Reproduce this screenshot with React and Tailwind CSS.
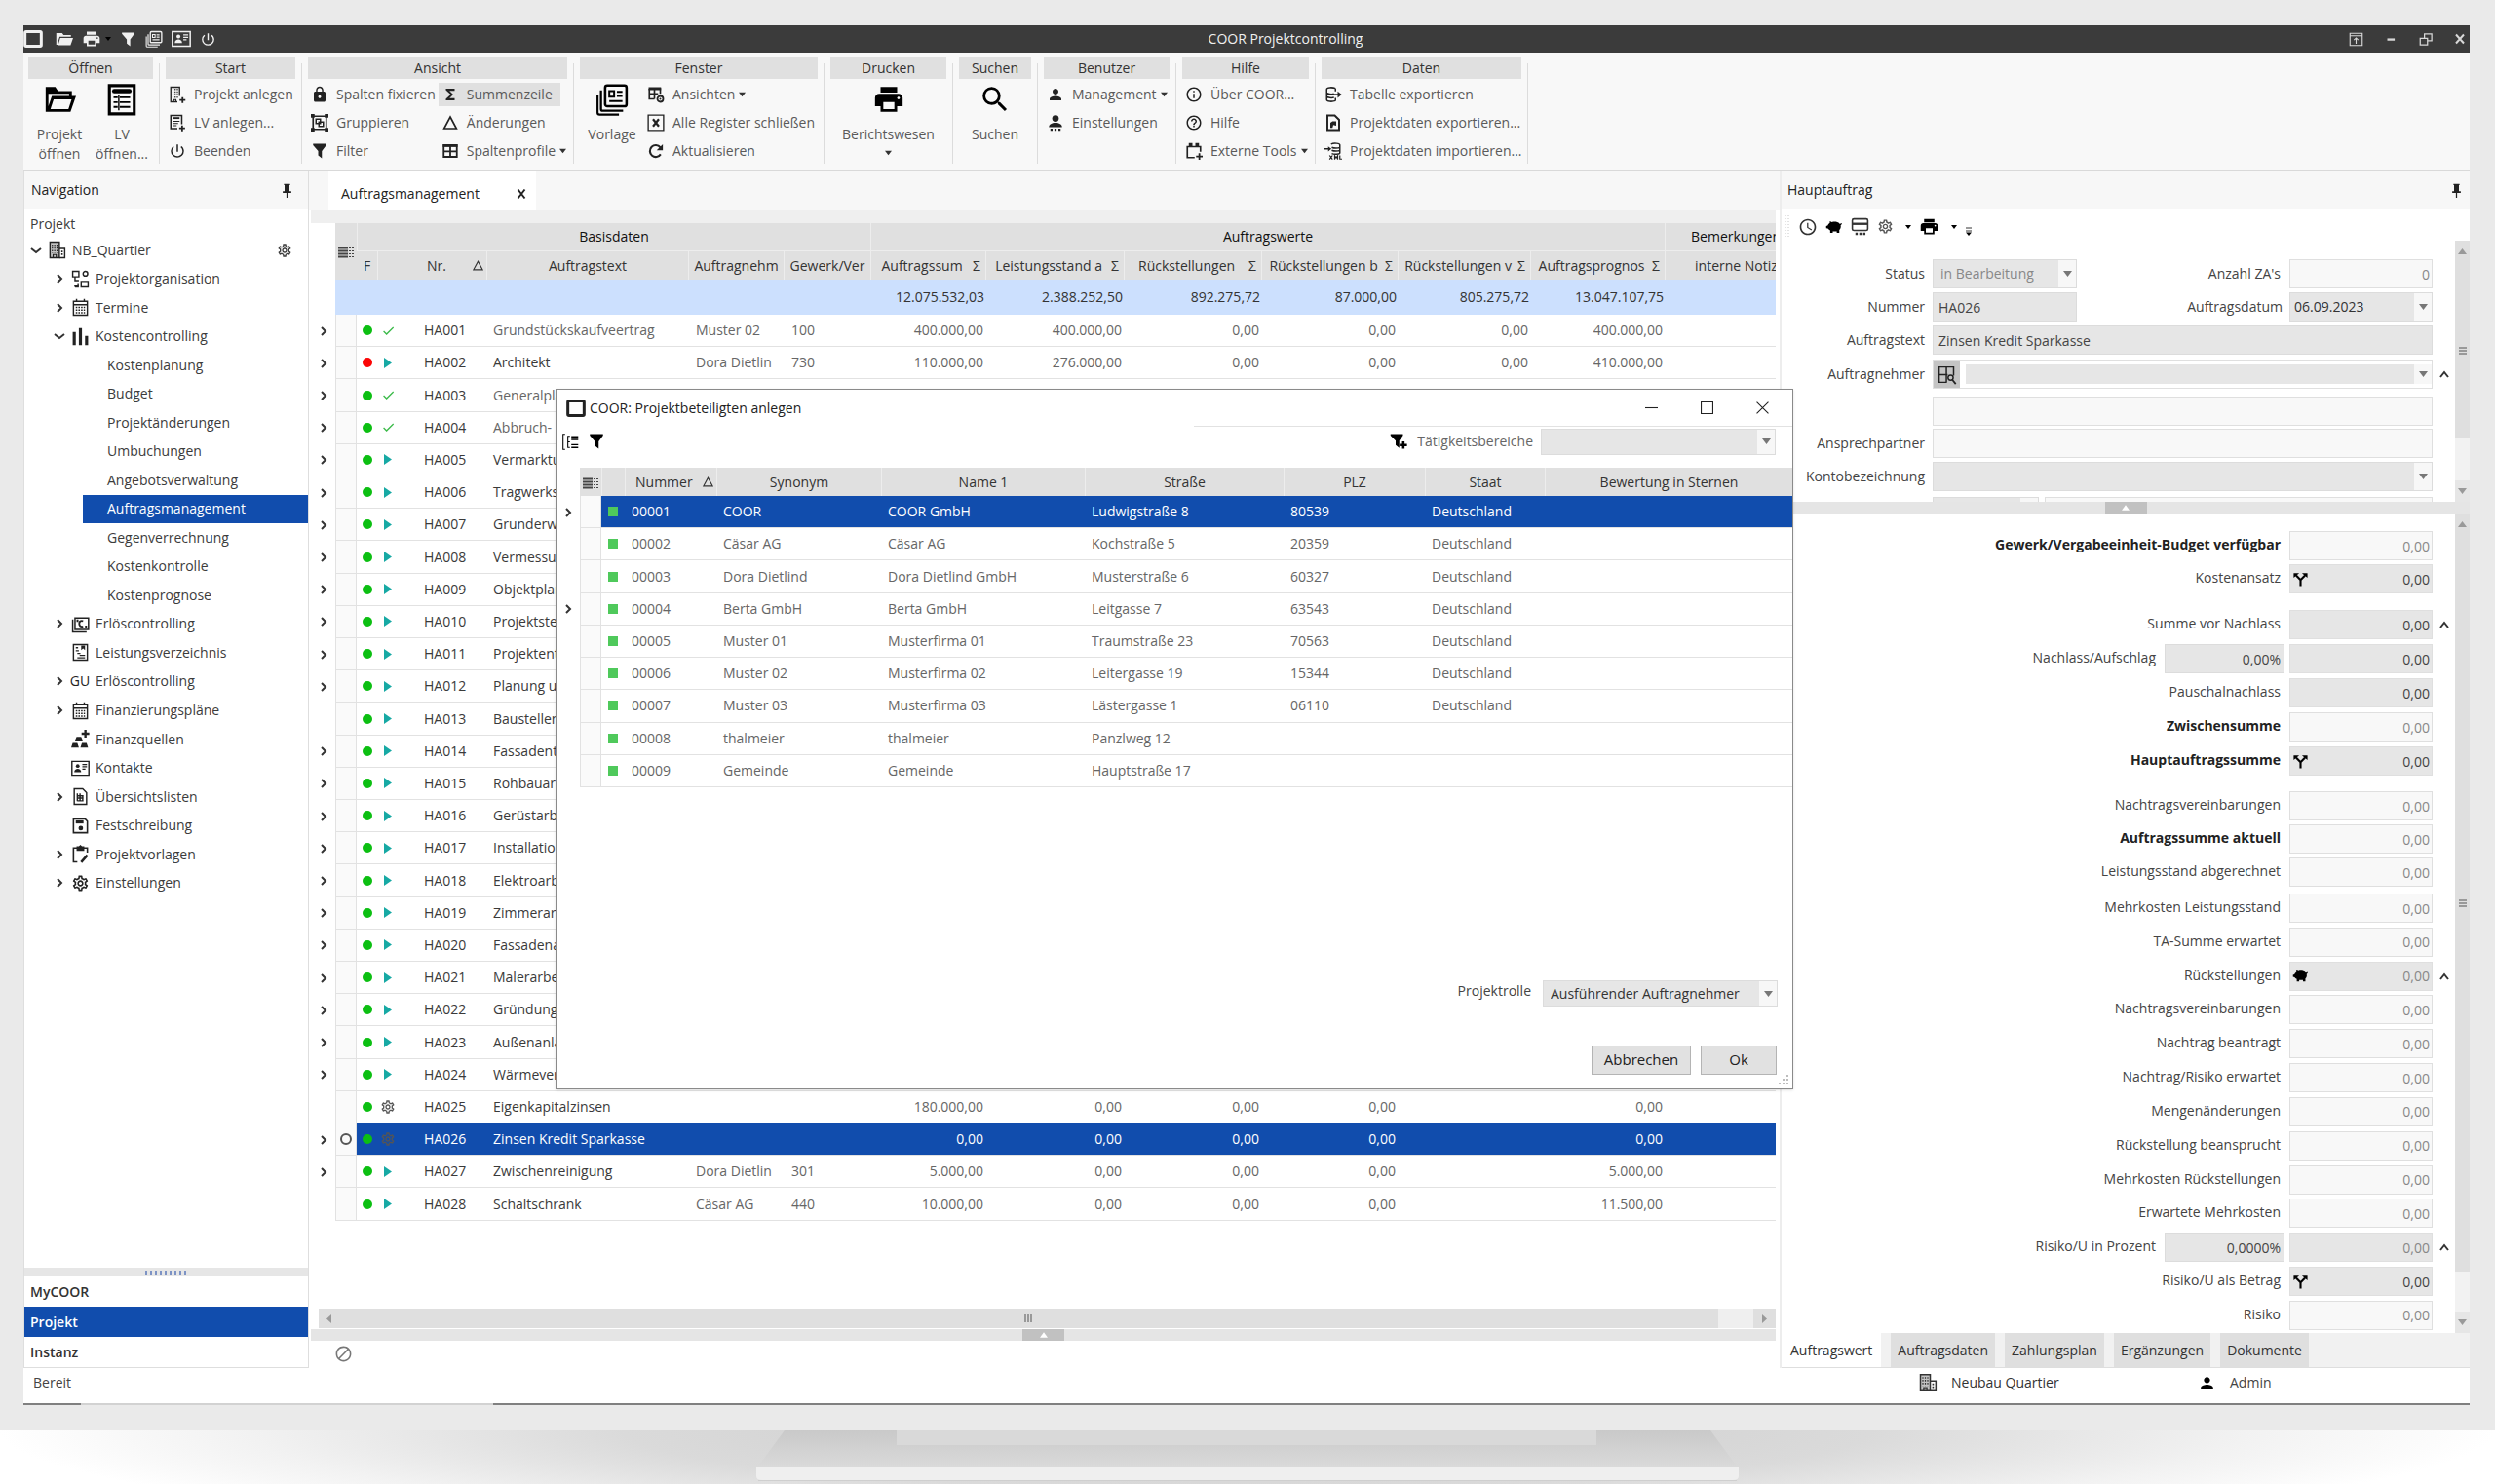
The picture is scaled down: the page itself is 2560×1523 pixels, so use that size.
import React, { useState } from 'react';
import clsx from 'clsx';
import {
  MdPrint, MdPowerSettingsNew, MdLock, MdInfoOutline, MdHelpOutline, MdPerson,
  MdSearch, MdOutlineSettings, MdAccessTime, MdBlock, MdFunctions, MdCheck,
} from 'react-icons/md';

/* ---------- icons ---------- */

const Svg = ({ size = 18, children, className, box = '0 0 24 24' }) => (
  <svg
    width={size}
    height={size}
    viewBox={box}
    fill="none"
    stroke="currentColor"
    strokeWidth="2"
    className={clsx('shrink-0', className)}
    aria-hidden="true"
  >
    {children}
  </svg>
);

const FilterIcon = ({ size }) => (
  <Svg size={size}>
    <path d="M3 2h18v2l-6 8v10l-5-4v-6L3 4z" fill="currentColor" stroke="none" />
  </Svg>
);

const FilterPlusIcon = ({ size }) => (
  <Svg size={size}>
    <path d="M1 2h17v2l-5 7v10l-5-4v-6L1 4z" fill="currentColor" stroke="none" />
    <path d="M18.500 12v10M13.500 17h10" strokeWidth="3.400" />
  </Svg>
);

const FolderIcon = ({ size }) => (
  <Svg size={size}>
    <path d="M2 21V3h7l2 3h10v4h-2V8H4v9l2.500-7.500H24L20 21H2z" fill="currentColor" stroke="none" />
    <path d="M7.800 12h13l-2.300 7H5.500z" fill="#f8f8f8" stroke="none" />
  </Svg>
);

const FolderSolidIcon = ({ size }) => (
  <Svg size={size}>
    <path d="M1 20V4h8l2 2.500h10V9H5.500L3 17V20z" fill="currentColor" stroke="none" />
    <path d="M6.500 10.500H24L20.500 20.500H3.500z" fill="currentColor" stroke="none" />
  </Svg>
);

const BuildingIcon = ({ size }) => (
  <Svg size={size}>
    <path d="M3 2h12v20H3z" strokeWidth="1.800" fill="#c4c4c4" />
    <path d="M6 5v11M9 5v11M12 5v11" strokeDasharray="2 1.500" strokeWidth="1.500" />
    <path d="M7 22v-4h4v4" strokeWidth="1.500" />
    <path d="M15 10h7v12h-7" strokeWidth="1.800" />
    <path d="M18.500 13v7" strokeDasharray="2 1.500" />
  </Svg>
);

const BuildingPlusIcon = ({ size }) => (
  <Svg size={size}>
    <path d="M15 14V2H3v20h9" strokeWidth="1.800" />
    <path d="M6 4v13M9 4v13M12 4v13" strokeDasharray="2 1.500" strokeWidth="1.500" />
    <path d="M7 22v-3h3v3" strokeWidth="1.500" />
    <path d="M19 15.500v8M15 19.500h8" strokeWidth="2.400" />
  </Svg>
);

const SheetIcon = ({ size }) => (
  <Svg size={size}>
    <path d="M3 2h18v20.500H3z" strokeWidth="2.200" />
    <path d="M6.500 6h11" strokeWidth="3.200" strokeLinecap="round" />
    <path d="M6 10.500h3M10.500 10.500h7.500M6 14h3M10.500 14h7.500M6 17.500h3M10.500 17.500h7.500" strokeWidth="1.300" />
    <path d="M9.800 9v11" strokeWidth="1" />
  </Svg>
);

const SheetPlusIcon = ({ size }) => (
  <Svg size={size}>
    <path d="M18 14V2H3v18h9" />
    <path d="M6 5.500h9" strokeWidth="2.500" />
    <path d="M6 10h9M6 13h7M6 16h5" strokeWidth="1.500" />
    <path d="M18.500 15.500v8M14.500 19.500h8" strokeWidth="2.400" />
  </Svg>
);

const GroupIcon = ({ size }) => (
  <Svg size={size}>
    <path d="M3 3h18v18H3z" strokeWidth="2.200" />
    <path d="M0 0h5v5H0zM19 0h5v5h-5zM0 19h5v5H0zM19 19h5v5h-5z" fill="currentColor" stroke="none" />
    <path d="M7 7h6v6H7zM11 11h6v6h-6z" strokeWidth="2" />
  </Svg>
);

const DeltaIcon = ({ size, className }) => (
  <Svg size={size} className={className}>
    <path d="M12 4l8.500 16h-17z" strokeWidth="2.200" />
  </Svg>
);

const ColumnProfileIcon = ({ size }) => (
  <Svg size={size}>
    <path d="M3 4h18v16H3zM12 4v16M3 12.500h18" strokeWidth="2.400" />
    <path d="M2 3h20v3.500H2z" fill="currentColor" stroke="none" />
  </Svg>
);

const TemplateIcon = ({ size }) => (
  <Svg size={size}>
    <rect x="7" y="2" width="15.500" height="15" rx="1.500" strokeWidth="1.800" />
    <path d="M4 5.500V19q0 1.200 1.200 1.200H20" strokeWidth="1.600" />
    <path d="M1.500 8.500v13q0 1.500 1.500 1.500h14" strokeWidth="1.500" />
    <path d="M10 6h3.500v4H10z" strokeWidth="1.400" />
    <path d="M15.500 6.500h4M15.500 9.500h4M10 13.200h9.500" strokeWidth="1.500" />
  </Svg>
);

const ViewsIcon = ({ size }) => (
  <Svg size={size}>
    <path d="M3 4h15v7M3 4v14h7M3 11h12M10 4v14" strokeWidth="2.200" />
    <path d="M2 2h17v4H2z" fill="currentColor" stroke="none" />
    <circle cx="18" cy="18" r="4" strokeWidth="2.400" />
    <circle cx="18" cy="18" r="1.300" fill="currentColor" stroke="none" />
  </Svg>
);

const CloseBoxIcon = ({ size }) => (
  <Svg size={size}>
    <path d="M1.500 1.500h21v21h-21z" strokeWidth="1.800" />
    <path d="M8 7l8 10M16 7l-8 10" strokeWidth="3" />
  </Svg>
);

const RefreshIcon = ({ size }) => (
  <Svg size={size}>
    <path d="M18.500 16.500A8 8 0 1 1 18 7" strokeWidth="2.800" />
    <path d="M21.500 2.500v8.500H13z" fill="currentColor" stroke="none" />
  </Svg>
);

const UserDotsIcon = ({ size }) => (
  <Svg size={size}>
    <g fill="currentColor" stroke="none">
      <circle cx="12" cy="6" r="4.500" />
      <path d="M3 18c0-4 4-6 9-6s9 2 9 6z" />
      <path d="M5 20h3v3H5zM10.500 20h3v3h-3zM16 20h3v3h-3z" />
    </g>
  </Svg>
);

const ToolsIcon = ({ size }) => (
  <Svg size={size}>
    <path d="M21 13V6H3v15h10" strokeWidth="2.200" />
    <path d="M5 1h5v5H5zM14 1h5v5h-5z" fill="currentColor" stroke="none" />
    <path d="M19.500 15v9M15 19.500h9" strokeWidth="2.400" />
  </Svg>
);

const DbExportIcon = ({ size }) => (
  <Svg size={size}>
    <path d="M15 3.500C11 2 3 2 3 5v14c0 3 8 3 12 1.500M3 9.500c1 2 7 2.500 10 1.500M3 14.500c1 2 7 2.500 10 1.500M15 3.500v4M15 20.500v-4" />
    <path d="M12 12h8" />
    <path d="M18 7.500l5.500 4.500-5.500 4.500z" fill="currentColor" stroke="none" />
  </Svg>
);

const FileExportIcon = ({ size }) => (
  <Svg size={size}>
    <path d="M4 2h10l6 6v14H4z" strokeWidth="2.600" />
    <path d="M8 19v-7l3-2h5v6l-4-1-1 4z" fill="currentColor" stroke="none" />
  </Svg>
);

const DbImportIcon = ({ size }) => (
  <Svg size={size}>
    <path d="M9 2.500c4-2 12-1 12 1v11c0 2-8 2.500-11 1M10 7c3 1.500 9 1.500 11 0M10 11c3 1.500 9 1.500 11 0" />
    <path d="M0 9h7" />
    <path d="M5 5.500L9.500 9 5 12.500z" fill="currentColor" stroke="none" />
    <path d="M7 18l4 5.500M11 18l-4 5.500M14 23.500v-5l2 3 2-3v5M21 18v5h3" strokeWidth="1.600" />
  </Svg>
);

const OrgIcon = ({ size }) => (
  <Svg size={size}>
    <path d="M2 2h8v7H2zM13 15h9v7h-9zM5 9v5h5" strokeWidth="1.800" />
    <circle cx="18.500" cy="5" r="3" strokeWidth="1.800" />
    <path d="M5 22v-2h4v-3" strokeWidth="1.800" />
    <path d="M5 19h5v4H5z" fill="currentColor" stroke="none" />
  </Svg>
);

const CalendarGridIcon = ({ size }) => (
  <Svg size={size}>
    <path d="M3 4h18v18H3zM3 8.500h18M7 1v4M17 1v4" strokeWidth="1.800" />
    <path d="M6 12h12M6 15.500h12M6 19h12" strokeDasharray="2 1.400" />
  </Svg>
);

const BarsIcon = ({ size }) => (
  <Svg size={size}>
    <path d="M4 6v17M12 1v22M20 11v12" strokeWidth="4" />
  </Svg>
);

const MoneyIcon = ({ size }) => (
  <Svg size={size}>
    <path d="M5 4h17.500v15H5zM2 6v16h18" strokeWidth="1.900" />
    <path d="M15.500 8c-4-1-5 1-5 3.500s1.500 4.500 5 3.500" strokeWidth="2.400" />
    <path d="M7 6h2.500v3H7zM18 14h2.500v3H18z" fill="currentColor" stroke="none" />
  </Svg>
);

const ListSheetIcon = ({ size }) => (
  <Svg size={size}>
    <path d="M3 2h18v20H3z" strokeWidth="1.800" />
    <path d="M13 3h5v6l-2.500-2L13 9z" fill="currentColor" stroke="none" />
    <path d="M6 6h3M6 10h4M8 13.500h4M11 16h7M8 19h10" strokeWidth="1.600" />
  </Svg>
);

const SourcesIcon = ({ size }) => (
  <Svg size={size}>
    <path d="M7 9h6l2 5H5zM2 17h6l2 6H0zM14 17h6l2 6H12z" fill="currentColor" stroke="none" />
    <path d="M18.500 0v10M13.500 5h10" strokeWidth="3" />
  </Svg>
);

const ContactIcon = ({ size }) => (
  <Svg size={size}>
    <path d="M1 3h22v18H1z" strokeWidth="1.800" />
    <circle cx="8.500" cy="9" r="2.400" fill="currentColor" stroke="none" />
    <path d="M4 17c0-6 9-6 9 0z" fill="currentColor" stroke="none" />
    <path d="M14.500 7h6M14.500 10h6M14.500 13h4" strokeWidth="1.600" />
  </Svg>
);

const DocIcon = ({ size }) => (
  <Svg size={size}>
    <path d="M4 2h11l5 5v15H4z" strokeWidth="1.800" />
    <path d="M8 8v10M11.500 8v10M15 11v7M8 11h8M8 14h8M8 17.500h8" strokeWidth="1.800" />
  </Svg>
);

const SaveIcon = ({ size }) => (
  <Svg size={size}>
    <path d="M3 3h15l3 3v15H3z" />
    <path d="M6 5h10v4H6z" fill="currentColor" stroke="none" />
    <circle cx="12.500" cy="15" r="3" fill="currentColor" stroke="none" />
  </Svg>
);

const ClipboardEditIcon = ({ size }) => (
  <Svg size={size}>
    <path d="M8 4H3v18h5M16 4h5v6" />
    <path d="M7 2h3l2-2 2 2h3v6H7z" fill="currentColor" stroke="none" />
    <path d="M13 22.500l8-9" strokeWidth="3.200" />
  </Svg>
);

const CardDotsIcon = ({ size }) => (
  <Svg size={size}>
    <rect x="2" y="2" width="20" height="15" rx="2" />
    <path d="M2 8.500h20" strokeWidth="3" />
    <path d="M6 20h3v3H6zM11 20h3v3h-3zM16 20h3v3h-3z" fill="currentColor" stroke="none" />
  </Svg>
);

const GridSearchIcon = ({ size }) => (
  <Svg size={size}>
    <path d="M12 21H3V3h17v10M3 12h10M11.500 3v18" strokeWidth="1.700" />
    <circle cx="16.500" cy="15.500" r="3" strokeWidth="1.700" />
    <path d="M18.500 18l4 5" strokeWidth="2" />
  </Svg>
);

const PiggyIcon = ({ size }) => (
  <Svg size={size}>
    <path
      d="M1 10.500l2-.5c.5-1.500 1.500-2.800 3-3.700V4l3 1.200C12 4.300 17 4.600 19.500 7.500c.8.200 1.500 0 2-1l1 .6c-.2 1.200-.8 2-1.700 2.500.7 3-.3 5-1.800 6.400V20h-3.500v-2H10v2H6.500v-3.500C5 15.800 4 15 3.300 14L1 13.500z"
      fill="currentColor"
      stroke="none"
    />
  </Svg>
);

const SplitIcon = ({ size }) => (
  <Svg size={size}>
    <path d="M12 22v-9L5.500 6.500M12 13l6.500-6.500" strokeWidth="3" />
    <path d="M2 10V3h8zM22 10V3h-8z" fill="currentColor" stroke="none" />
  </Svg>
);

const PinIcon = () => (
  <Svg size={15}>
    <path d="M7 1h10v2h-1v10h3v3H5v-3h3V3H7z" fill="currentColor" stroke="none" />
    <path d="M12 16v8" strokeWidth="2" />
  </Svg>
);

const ColumnsIcon = () => (
  <svg width="16" height="12" viewBox="0 0 16 12" className="inline-block" stroke="#444" aria-hidden="true">
    <path d="M0 1.500h10M0 4.500h10M0 7.500h10M0 10.500h10" strokeWidth="2" />
    <path d="M11 1.500h2M11 4.500h2M11 7.500h2M11 10.500h2M14 1.500h2M14 4.500h2M14 7.500h2M14 10.500h2" strokeWidth="1" />
  </svg>
);

const TreeListIcon = ({ size }) => (
  <Svg size={size}>
    <path d="M4 1H1v22h3M11 4H8v16h3M8 12h3" strokeWidth="1.500" />
    <path d="M13 4.500h10M13 8.500h10M13 16h10M13 20h10" strokeWidth="2" />
  </Svg>
);

const CoorLogo = ({ size = 18 }) => (
  <Svg size={size}>
    <rect x="2" y="3" width="20" height="18" rx="1.500" strokeWidth="3.600" />
  </Svg>
);

const Chevron = ({ dir = 'right' }) => (
  <svg width="12" height="12" viewBox="0 0 12 12" fill="none" stroke="#333" strokeWidth="2" className="shrink-0" aria-hidden="true">
    {dir === 'right' && <path d="M4 2l4 4-4 4" />}
    {dir === 'down' && <path d="M1 4l5 4 5-4" />}
    {dir === 'up' && <path d="M2 9l4-5 4 5" />}
  </svg>
);

const Caret = ({ up, className }) => (
  <svg width="9" height="6" viewBox="0 0 9 6" fill="currentColor" className={clsx('shrink-0', className)} aria-hidden="true">
    <path d={up ? 'M0 6h9L4.500 0z' : 'M0 0h9L4.500 6z'} />
  </svg>
);

/* ---------- data ---------- */

const TREE = [
  { level: 0, label: 'NB_Quartier', icon: BuildingIcon, open: 'down', gear: true },
  { level: 1, label: 'Projektorganisation', icon: OrgIcon, open: 'right' },
  { level: 1, label: 'Termine', icon: CalendarGridIcon, open: 'right' },
  { level: 1, label: 'Kostencontrolling', icon: BarsIcon, open: 'down' },
  { level: 2, label: 'Kostenplanung' },
  { level: 2, label: 'Budget' },
  { level: 2, label: 'Projektänderungen' },
  { level: 2, label: 'Umbuchungen' },
  { level: 2, label: 'Angebotsverwaltung' },
  { level: 2, label: 'Auftragsmanagement' },
  { level: 2, label: 'Gegenverrechnung' },
  { level: 2, label: 'Kostenkontrolle' },
  { level: 2, label: 'Kostenprognose' },
  { level: 1, label: 'Erlöscontrolling', icon: MoneyIcon, open: 'right' },
  { level: 1, label: 'Leistungsverzeichnis', icon: ListSheetIcon },
  { level: 1, label: 'Erlöscontrolling', text: 'GU', open: 'right' },
  { level: 1, label: 'Finanzierungspläne', icon: CalendarGridIcon, open: 'right' },
  { level: 1, label: 'Finanzquellen', icon: SourcesIcon },
  { level: 1, label: 'Kontakte', icon: ContactIcon },
  { level: 1, label: 'Übersichtslisten', icon: DocIcon, open: 'right' },
  { level: 1, label: 'Festschreibung', icon: SaveIcon },
  { level: 1, label: 'Projektvorlagen', icon: ClipboardEditIcon, open: 'right' },
  { level: 1, label: 'Einstellungen', icon: MdOutlineSettings, open: 'right' },
];

// nr, text, state, expandable, contractor, trade, amounts
const ORDERS = [
  ['HA001', 'Grundstückskaufveertrag', 'check', true, 'Muster 02', '100', ['400.000,00', '400.000,00', '0,00', '0,00', '0,00', '400.000,00']],
  ['HA002', 'Architekt', 'play', true, 'Dora Dietlin', '730', ['110.000,00', '276.000,00', '0,00', '0,00', '0,00', '410.000,00']],
  ['HA003', 'Generalplaner', 'check', true],
  ['HA004', 'Abbruch- und Erdarbeiten', 'check', true],
  ['HA005', 'Vermarktung', 'play', true],
  ['HA006', 'Tragwerksplanung', 'play', true],
  ['HA007', 'Grunderwerbsteuer', 'play', true],
  ['HA008', 'Vermessung', 'play', true],
  ['HA009', 'Objektplanung', 'play', true],
  ['HA010', 'Projektsteuerung', 'play', true],
  ['HA011', 'Projektentwicklung', 'play', true],
  ['HA012', 'Planung und Beratung', 'play', true],
  ['HA013', 'Baustelleneinrichtung', 'play', false],
  ['HA014', 'Fassadentechnik', 'play', true],
  ['HA015', 'Rohbauarbeiten', 'play', true],
  ['HA016', 'Gerüstarbeiten', 'play', true],
  ['HA017', 'Installationen', 'play', true],
  ['HA018', 'Elektroarbeiten', 'play', true],
  ['HA019', 'Zimmerarbeiten', 'play', true],
  ['HA020', 'Fassadenarbeiten', 'play', true],
  ['HA021', 'Malerarbeiten', 'play', true],
  ['HA022', 'Gründung', 'play', true],
  ['HA023', 'Außenanlagen', 'play', true],
  ['HA024', 'Wärmeversorgung', 'play', true],
  ['HA025', 'Eigenkapitalzinsen', 'gear', false, '', '', ['180.000,00', '0,00', '0,00', '0,00', '', '0,00']],
  ['HA026', 'Zinsen Kredit Sparkasse', 'gear', true, '', '', ['0,00', '0,00', '0,00', '0,00', '', '0,00']],
  ['HA027', 'Zwischenreinigung', 'play', true, 'Dora Dietlin', '301', ['5.000,00', '0,00', '0,00', '0,00', '', '5.000,00']],
  ['HA028', 'Schaltschrank', 'play', false, 'Cäsar AG', '440', ['10.000,00', '0,00', '0,00', '0,00', '', '11.500,00']],
];

const SUMS = ['12.075.532,03', '2.388.252,50', '892.275,72', '87.000,00', '805.275,72', '13.047.107,75'];
const AMOUNT_HEADS = ['Auftragssum', 'Leistungsstand a', 'Rückstellungen', 'Rückstellungen b', 'Rückstellungen v', 'Auftragsprognos'];

const PARTNERS = [
  ['00001', 'COOR', 'COOR GmbH', 'Ludwigstraße 8', '80539', 'Deutschland', true],
  ['00002', 'Cäsar AG', 'Cäsar AG', 'Kochstraße 5', '20359', 'Deutschland'],
  ['00003', 'Dora Dietlind', 'Dora Dietlind GmbH', 'Musterstraße 6', '60327', 'Deutschland'],
  ['00004', 'Berta GmbH', 'Berta GmbH', 'Leitgasse 7', '63543', 'Deutschland', true],
  ['00005', 'Muster 01', 'Musterfirma 01', 'Traumstraße 23', '70563', 'Deutschland'],
  ['00006', 'Muster 02', 'Musterfirma 02', 'Leitergasse 19', '15344', 'Deutschland'],
  ['00007', 'Muster 03', 'Musterfirma 03', 'Lästergasse 1', '06110', 'Deutschland'],
  ['00008', 'thalmeier', 'thalmeier', 'Panzlweg 12', '', ''],
  ['00009', 'Gemeinde', 'Gemeinde', 'Hauptstraße 17', '', ''],
];

const VALUES_TOP = [
  { label: 'Gewerk/Vergabeeinheit-Budget verfügbar', bold: true },
  { label: 'Kostenansatz', edit: true, icon: SplitIcon },
];
const VALUES_DISCOUNT = [
  { label: 'Summe vor Nachlass', edit: true, fold: true },
  { label: 'Nachlass/Aufschlag', edit: true, percent: '0,00%' },
  { label: 'Pauschalnachlass', edit: true },
  { label: 'Zwischensumme', bold: true },
  { label: 'Hauptauftragssumme', bold: true, edit: true, icon: SplitIcon },
];
const VALUES_CURRENT = [
  { label: 'Nachtragsvereinbarungen' },
  { label: 'Auftragssumme aktuell', bold: true },
  { label: 'Leistungsstand abgerechnet' },
];
const VALUES_EXPECTED = [
  { label: 'Mehrkosten Leistungsstand' },
  { label: 'TA-Summe erwartet' },
  { label: 'Rückstellungen', locked: true, icon: PiggyIcon, fold: true },
  { label: 'Nachtragsvereinbarungen' },
  { label: 'Nachtrag beantragt' },
  { label: 'Nachtrag/Risiko erwartet' },
  { label: 'Mengenänderungen' },
  { label: 'Rückstellung beansprucht' },
  { label: 'Mehrkosten Rückstellungen' },
  { label: 'Erwartete Mehrkosten' },
  { label: 'Risiko/U in Prozent', locked: true, percent: '0,0000%', fold: true },
  { label: 'Risiko/U als Betrag', edit: true, icon: SplitIcon },
  { label: 'Risiko' },
];

/* ---------- title bar and ribbon ---------- */

const TitleBar = () => (
  <header className="flex h-7 shrink-0 items-center bg-[#3b3b3b] text-[#f0f0f0]">
    <div className="flex w-[204px] items-center gap-[9px]">
      <CoorLogo size={20} />
      <button aria-label="Öffnen" className="ml-1"><FolderSolidIcon size={18} /></button>
      <button aria-label="Drucken" className="flex items-center gap-1">
        <MdPrint size={20} />
        <Caret className="w-1.5 text-black" />
      </button>
      <button aria-label="Filter"><FilterIcon size={17} /></button>
      <button aria-label="Vorlage"><TemplateIcon size={18} /></button>
      <button aria-label="Kontakte"><ContactIcon size={20} /></button>
      <button aria-label="Beenden"><MdPowerSettingsNew size={17} /></button>
    </div>
    <h1 className="flex-1 text-center text-sm">COOR Projektcontrolling</h1>
    <div className="flex w-[124px] items-center justify-between pr-1 text-[#d8d8d8]">
      <button aria-label="Menüband">
        <Svg size={15}><path d="M2 2h20v20H2zM2 6h20M12 19v-9M8.500 13l3.500-3.500 3.500 3.500" strokeWidth="1.800" /></Svg>
      </button>
      <button aria-label="Minimieren"><Svg size={14}><path d="M6 13h13" strokeWidth="4" /></Svg></button>
      <button aria-label="Wiederherstellen">
        <Svg size={15}><path d="M2 10h12v11H2zM9 10V3h12v11h-7" /></Svg>
      </button>
      <button aria-label="Schließen"><Svg size={12}><path d="M4 3l16 18M20 3L4 21" strokeWidth="4" /></Svg></button>
    </div>
  </header>
);

const RibbonItem = ({ icon: Icon, label, caret, active }) => (
  <div className="flex flex-1 items-center">
    <button className={clsx('flex h-6 items-center gap-2 whitespace-nowrap px-[3px]', active && 'bg-[#e0e0e0] pr-2')}>
      <span className="flex w-[18px] justify-center text-[#222]"><Icon size={18} /></span>
      <span className="flex items-center gap-1">
        {label}
        {caret && <Caret className="w-[7px] text-[#333]" />}
      </span>
    </button>
  </div>
);

const RibbonColumn = ({ children, className }) => (
  <div className={clsx('flex h-full flex-col', className)}>{children}</div>
);

const RibbonLarge = ({ icon: Icon, lines, caret, className }) => (
  <button className={clsx('flex flex-col items-center pt-0.5 leading-5', className)}>
    <span className="mb-2 flex h-9 items-center text-black"><Icon size={34} /></span>
    {lines.map((line) => <span key={line}>{line}</span>)}
    {caret && <Caret className="mt-1.5 w-[7px] text-[#333]" />}
  </button>
);

const RibbonGroup = ({ title, className, children }) => (
  <>
    <section className={clsx('flex shrink-0 flex-col', className)}>
      <h2 className="h-[22px] bg-[#e0e0e0] text-center leading-[22px] text-[#333]">{title}</h2>
      <div className="flex h-[89px] pt-px">{children}</div>
    </section>
    <div className="mx-1.5 my-1.5 w-px shrink-0 bg-[#dcdcdc]" />
  </>
);

const Ribbon = () => (
  <div className="flex h-[122px] shrink-0 border-b-2 border-[#d9d9d9] bg-[#f8f8f8] pl-[5px] pt-[5px] text-sm text-[#5a5a5a]">
    <RibbonGroup title="Öffnen" className="w-32">
      <RibbonLarge icon={FolderIcon} lines={['Projekt', 'öffnen']} className="w-16" />
      <RibbonLarge icon={SheetIcon} lines={['LV', 'öffnen...']} className="w-16" />
    </RibbonGroup>
    <RibbonGroup title="Start" className="w-[133px]">
      <RibbonColumn>
        <RibbonItem icon={BuildingPlusIcon} label="Projekt anlegen" />
        <RibbonItem icon={SheetPlusIcon} label="LV anlegen..." />
        <RibbonItem icon={MdPowerSettingsNew} label="Beenden" />
      </RibbonColumn>
    </RibbonGroup>
    <RibbonGroup title="Ansicht" className="w-[266px]">
      <RibbonColumn className="w-[134px]">
        <RibbonItem icon={MdLock} label="Spalten fixieren" />
        <RibbonItem icon={GroupIcon} label="Gruppieren" />
        <RibbonItem icon={FilterIcon} label="Filter" />
      </RibbonColumn>
      <RibbonColumn>
        <RibbonItem icon={MdFunctions} label="Summenzeile" active />
        <RibbonItem icon={DeltaIcon} label="Änderungen" />
        <RibbonItem icon={ColumnProfileIcon} label="Spaltenprofile" caret />
      </RibbonColumn>
    </RibbonGroup>
    <RibbonGroup title="Fenster" className="w-[244px]">
      <RibbonLarge icon={TemplateIcon} lines={['Vorlage']} className="w-[66px]" />
      <RibbonColumn>
        <RibbonItem icon={ViewsIcon} label="Ansichten" caret />
        <RibbonItem icon={CloseBoxIcon} label="Alle Register schließen" />
        <RibbonItem icon={RefreshIcon} label="Aktualisieren" />
      </RibbonColumn>
    </RibbonGroup>
    <RibbonGroup title="Drucken" className="w-[119px]">
      <RibbonLarge icon={MdPrint} lines={['Berichtswesen']} caret className="w-full" />
    </RibbonGroup>
    <RibbonGroup title="Suchen" className="w-[74px]">
      <RibbonLarge icon={MdSearch} lines={['Suchen']} className="w-full" />
    </RibbonGroup>
    <RibbonGroup title="Benutzer" className="w-[129px]">
      <RibbonColumn>
        <RibbonItem icon={MdPerson} label="Management" caret />
        <RibbonItem icon={UserDotsIcon} label="Einstellungen" />
        <div className="flex-1" />
      </RibbonColumn>
    </RibbonGroup>
    <RibbonGroup title="Hilfe" className="w-[130px]">
      <RibbonColumn>
        <RibbonItem icon={MdInfoOutline} label="Über COOR..." />
        <RibbonItem icon={MdHelpOutline} label="Hilfe" />
        <RibbonItem icon={ToolsIcon} label="Externe Tools" caret />
      </RibbonColumn>
    </RibbonGroup>
    <RibbonGroup title="Daten" className="w-[205px]">
      <RibbonColumn>
        <RibbonItem icon={DbExportIcon} label="Tabelle exportieren" />
        <RibbonItem icon={FileExportIcon} label="Projektdaten exportieren..." />
        <RibbonItem icon={DbImportIcon} label="Projektdaten importieren..." />
      </RibbonColumn>
    </RibbonGroup>
  </div>
);

/* ---------- navigation ---------- */

const TreeRow = ({ item, selected, onSelect }) => {
  const Icon = item.icon;

  if (item.level === 2) {
    return (
      <li className="ml-[60px] flex flex-1">
        <button
          onClick={() => onSelect(item.label)}
          className={clsx('w-full pl-[25px] text-left', selected && 'bg-[#114dad] text-white')}
        >
          {item.label}
        </button>
      </li>
    );
  }

  return (
    <li className={clsx('flex flex-1 items-center pr-4', item.level === 0 ? 'pl-1' : 'pl-7')}>
      <span className="flex w-4 justify-center">{item.open && <Chevron dir={item.open} />}</span>
      <span className="ml-0.5 flex w-[22px] justify-center text-[#222]">
        {Icon ? <Icon size={19} /> : item.text}
      </span>
      <button className="ml-[5px] flex-1 text-left">{item.label}</button>
      {item.gear && <button aria-label="Projekteinstellungen"><MdOutlineSettings size={16} /></button>}
    </li>
  );
};

const Navigation = () => {
  const [current, setCurrent] = useState('Auftragsmanagement');

  return (
    <nav className="flex w-[293px] shrink-0 flex-col border border-t-0 border-[#dedede] text-sm text-[#3c3c3c]">
      <div className="flex h-[38px] shrink-0 items-center justify-between bg-[#f7f7f7] pl-[7px] pr-3.5 font-medium text-[#222]">
        Navigation
        <button aria-label="Anheften"><PinIcon /></button>
      </div>
      <div className="flex h-7 shrink-0 items-center pl-1.5 pt-1">Projekt</div>
      <ul className="flex h-[679px] shrink-0 flex-col">
        {TREE.map((item, i) => (
          <TreeRow
            key={i}
            item={item}
            selected={item.level === 2 && item.label === current}
            onSelect={setCurrent}
          />
        ))}
      </ul>
      <div className="flex-1" />
      <div className="flex h-[9px] shrink-0 items-center justify-center bg-[#e6e6e6] text-[#7d93c4]">
        <svg width="44" height="4" aria-hidden="true">
          <path d="M0 2h44" stroke="currentColor" strokeWidth="4" strokeDasharray="2 3" />
        </svg>
      </div>
      {['MyCOOR', 'Projekt', 'Instanz'].map((area) => (
        <button
          key={area}
          className={clsx(
            'h-[31px] shrink-0 pl-1.5 text-left font-semibold',
            area === 'Projekt' ? 'bg-[#114dad] text-white' : 'text-[#333]'
          )}
        >
          {area}
        </button>
      ))}
    </nav>
  );
};

/* ---------- order table ---------- */

const StateIcon = ({ state }) => {
  if (state === 'check') return <MdCheck size={15} className="text-[#3dbb4b]" />;
  if (state === 'gear') return <MdOutlineSettings size={16} className="text-[#555]" />;
  return (
    <svg width="8" height="11" viewBox="0 0 8 11" aria-hidden="true">
      <path d="M0 0v11l8-5.500z" fill="#17a9a4" />
    </svg>
  );
};

const headCell = 'border-l border-[#ededed] bg-[#e0e0e0] p-0 font-normal overflow-hidden whitespace-nowrap';

const OrderColumns = () => (
  <colgroup>
    <col className="w-[25px]" />
    <col className="w-[22px]" />
    <col className="w-[21px]" />
    <col className="w-[26px]" />
    <col className="w-[86px]" />
    <col className="w-[207px]" />
    <col className="w-[98px]" />
    <col className="w-[89px]" />
    <col className="w-[118px]" />
    <col className="w-[142px]" />
    <col className="w-[141px]" />
    <col className="w-[140px]" />
    <col className="w-[136px]" />
    <col className="w-[138px]" />
    <col />
  </colgroup>
);

const OrderHead = () => (
  <table className="w-full table-fixed border-separate border-spacing-0 text-sm text-[#333]">
    <OrderColumns />
    <thead>
      <tr className="h-[29px]">
        <td />
        <th rowSpan={2} className="bg-[#e0e0e0] p-0"><ColumnsIcon /></th>
        <th colSpan={6} className={clsx(headCell, 'border-b')}>
          <span className="font-medium text-[#111]">Basisdaten</span>
        </th>
        <th colSpan={6} className={clsx(headCell, 'border-b')}>
          <span className="font-medium text-[#111]">Auftragswerte</span>
        </th>
        <th className={clsx(headCell, 'border-b')}>
          <div className="pl-[26px] text-left font-medium text-[#111]">Bemerkungen</div>
        </th>
      </tr>
      <tr className="h-[29px]">
        <td />
        <th className={clsx(headCell, 'border-l-0')}>F</th>
        <th className={headCell} />
        <th className={headCell}>
          <div className="flex items-center justify-between pl-6 pr-0.5">Nr. <DeltaIcon size={13} /></div>
        </th>
        <th className={headCell}>Auftragstext</th>
        <th className={headCell}>Auftragnehm</th>
        <th className={headCell}>Gewerk/Ver</th>
        {AMOUNT_HEADS.map((head) => (
          <th key={head} className={headCell}>
            <div className="flex items-center pr-[5px]">
              <span className="flex-1">{head}</span>
              <span>Σ</span>
            </div>
          </th>
        ))}
        <th className={headCell}>
          <div className="pl-[30px] text-left">interne Notiz</div>
        </th>
      </tr>
    </thead>
    <tbody>
      <tr className="h-9">
        <td />
        <td colSpan={7} className="bg-[#cce0fe]" />
        {SUMS.map((sum) => (
          <td key={sum} className="bg-[#cce0fe] p-0 pr-px text-right">{sum}</td>
        ))}
        <td className="bg-[#cce0fe]" />
      </tr>
    </tbody>
  </table>
);

const OrderRows = () => (
  <table className="h-[930px] w-full table-fixed border-separate border-spacing-0 text-sm text-[#666]">
    <OrderColumns />
    <tbody>
      {ORDERS.map(([nr, text, state, expandable, contractor = '', trade = '', amounts = []]) => {
        const selected = nr === 'HA026';
        const cell = clsx('overflow-hidden whitespace-nowrap border-b border-[#e2e2e2] p-0', selected && 'bg-[#114dad] text-white');
        const dark = !selected && 'text-[#3a3a3a]';
        return (
          <tr key={nr}>
            <td className="p-0">
              {expandable && <div className="flex justify-center"><Chevron /></div>}
            </td>
            <td className="border-x border-b border-[#e2e2e2] bg-[#fafafa] p-0">
              {selected && <div className="mx-auto h-3 w-3 rounded-full border-2 border-[#555]" />}
            </td>
            <td className={cell}>
              <div className={clsx('mx-auto h-[10px] w-[10px] rounded-full', nr === 'HA002' ? 'bg-[#fb0505]' : 'bg-[#0cbf12]')} />
            </td>
            <td className={cell}>
              <div className="flex justify-center pr-1"><StateIcon state={state} /></div>
            </td>
            <td className={clsx(cell, 'pl-[22px]', dark)}>{nr}</td>
            <td className={clsx(cell, 'pl-[7px]', state !== 'check' && dark)}>{text}</td>
            <td className={clsx(cell, 'pl-2')}>{contractor}</td>
            <td className={clsx(cell, 'pl-2')}>{trade}</td>
            {AMOUNT_HEADS.map((head, i) => (
              <td key={head} className={clsx(cell, 'pr-0.5 text-right')}>{amounts[i]}</td>
            ))}
            <td className={cell} />
          </tr>
        );
      })}
    </tbody>
  </table>
);

const Splitter = ({ className }) => (
  <div className={clsx('flex h-3 shrink-0 justify-center bg-[#e5e5e5]', className)}>
    <span className="flex h-full w-[43px] items-center justify-center bg-[#c1c1c1] text-white"><Caret up className="w-2" /></span>
  </div>
);

const Workspace = () => (
  <main className="flex min-w-0 flex-1 flex-col">
    <div className="flex h-10 shrink-0 bg-[#f7f7f7] pl-5">
      <div className="flex w-[213px] items-center justify-between bg-white pl-[13px] pr-[9px] pt-1.5 text-sm text-[#222]">
        Auftragsmanagement
        <button aria-label="Register schließen">
          <Svg size={12}><path d="M5 3l14 18M19 3L5 21" strokeWidth="4" /></Svg>
        </button>
      </div>
    </div>
    <div className="flex flex-1 flex-col pl-0.5 pr-1">
      <div className="h-[13px] shrink-0 bg-[#efefef]" />
      <OrderHead />
      <OrderRows />
      <div className="flex-1" />
      <div className="ml-2 flex h-5 shrink-0 items-center bg-[#dfdfdf] text-[#999]">
        <svg width="20" height="9" className="shrink-0" aria-hidden="true"><path d="M13 0v9L8 4.500z" fill="currentColor" /></svg>
        <div className="flex flex-1 justify-center">
          <svg width="9" height="8" aria-hidden="true"><path d="M1 0v8M4 0v8M7 0v8" stroke="currentColor" strokeWidth="2" /></svg>
        </div>
        <div className="h-full w-9 bg-[#efefef]" />
        <svg width="23" height="9" className="shrink-0" aria-hidden="true"><path d="M9 0v9l5-4.500z" fill="currentColor" /></svg>
      </div>
      <Splitter className="mt-px" />
      <div className="flex h-7 shrink-0 items-center pb-0.5 pl-6 text-[#777]"><MdBlock size={19} /></div>
    </div>
  </main>
);

/* ---------- detail panel ---------- */

const Combo = ({ id, value = '', className, textClass = 'text-[#555]', label }) => (
  <div className={clsx('flex border border-[#dcdcdc] bg-[#e6e6e6]', className)}>
    <select id={id} aria-label={label} className={clsx('min-w-0 flex-1 appearance-none bg-transparent outline-none', textClass)}>
      <option>{value}</option>
    </select>
    <span className="pointer-events-none flex w-[18px] items-center justify-center bg-[#f7f7f7] text-[#777]">
      <Caret />
    </span>
  </div>
);

const FormRow = ({ id, label, children, className }) => (
  <div className={clsx('flex h-[30px] items-center', className)}>
    <label htmlFor={id} className="w-[147px] shrink-0 pr-2 text-right">{label}</label>
    {children}
  </div>
);

const VScroll = ({ thumb, grip }) => (
  <div className="flex w-[15px] shrink-0 flex-col items-center bg-[#f2f2f2] text-[#999]">
    <div className={clsx('flex w-full flex-col items-center bg-[#dfdfdf] pt-2', thumb)}>
      <Caret up />
      <svg width="8" height="9" className={grip} aria-hidden="true">
        <path d="M0 1h8M0 4h8M0 7h8" stroke="currentColor" strokeWidth="2" />
      </svg>
    </div>
    <div className="flex-1" />
    <div className="flex h-[22px] w-full items-center justify-center bg-[#e6e6e6]"><Caret /></div>
  </div>
);

const ValueRow = ({ id, row }) => {
  const Icon = row.icon;
  const filled = row.edit || row.locked;
  return (
    <div className="flex h-[30px] shrink-0 items-center">
      <label htmlFor={id} className={clsx('flex-1 pb-0.5 pr-[9px] text-right', row.bold && 'font-bold text-[#222]')}>{row.label}</label>
      {row.percent && (
        <input
          aria-label={`${row.label} Prozentwert`}
          defaultValue={row.percent}
          className="mr-[5px] h-full w-[123px] border border-[#dcdcdc] bg-[#e6e6e6] pr-[3px] text-right"
        />
      )}
      <div className={clsx('flex h-full w-[147px] items-center border border-[#dfdfdf]', filled ? 'bg-[#e6e6e6]' : 'bg-[#f8f8f8]')}>
        {Icon && <span className="ml-0.5 text-black"><Icon size={17} /></span>}
        <input
          id={id}
          defaultValue="0,00"
          className={clsx('h-full w-full min-w-0 bg-transparent pr-0.5 text-right', row.edit ? 'text-[#444]' : 'text-[#888]')}
        />
      </div>
      <span className="flex w-[23px] justify-center">{row.fold && <Chevron dir="up" />}</span>
    </div>
  );
};

const ValueGroup = ({ name, rows, className }) => (
  <div className={clsx('flex shrink-0 flex-col', className)}>
    {rows.map((row, i) => <ValueRow key={row.label} id={`${name}-${i}`} row={row} />)}
  </div>
);

const DetailForm = () => (
  <div className="flex h-[268px] shrink-0 overflow-hidden">
    <div className="flex-1 pl-2 pt-[19px]">
      <FormRow id="status" label="Status">
        <Combo id="status" value="in Bearbeitung" className="h-full w-[148px]" textClass="pl-[7px] text-[#888]" />
        <label htmlFor="za" className="flex-1 pr-[9px] text-right">Anzahl ZA's</label>
        <input id="za" defaultValue="0" className="mr-[23px] h-full w-[147px] border border-[#dfdfdf] bg-[#f8f8f8] pr-0.5 text-right text-[#888]" />
      </FormRow>
      <FormRow id="nummer" label="Nummer" className="mt-1">
        <input id="nummer" defaultValue="HA026" className="h-full w-[148px] border border-[#dcdcdc] bg-[#e6e6e6] pl-[5px]" />
        <label htmlFor="datum" className="flex-1 pr-[7px] text-right">Auftragsdatum</label>
        <Combo id="datum" value="06.09.2023" className="mr-[23px] h-full w-[147px]" textClass="pl-1 text-[#333]" />
      </FormRow>
      <FormRow id="text" label="Auftragstext" className="mt-1">
        <input id="text" defaultValue="Zinsen Kredit Sparkasse" className="mr-[23px] h-full flex-1 border border-[#dcdcdc] bg-[#e6e6e6] pl-[5px]" />
      </FormRow>
      <FormRow id="nehmer" label="Auftragnehmer" className="mt-[5px]">
        <div className="flex h-full flex-1 border border-[#dfdfdf]">
          <button aria-label="Auftragnehmer suchen" className="flex w-[27px] items-center justify-center bg-[#c4c4c4] text-[#222]">
            <GridSearchIcon size={21} />
          </button>
          <Combo id="nehmer" className="my-1 ml-1.5 flex-1 border-none" />
        </div>
        <span className="flex w-[23px] justify-center"><Chevron dir="up" /></span>
      </FormRow>
      <FormRow id="zusatz" label="" className="mt-2">
        <input id="zusatz" aria-label="Zusatz" className="mr-[23px] h-full flex-1 border border-[#dfdfdf] bg-[#f8f8f8]" />
      </FormRow>
      <FormRow id="partner" label="Ansprechpartner" className="mt-[3px]">
        <input id="partner" className="mr-[23px] h-full flex-1 border border-[#dfdfdf] bg-[#f8f8f8]" />
      </FormRow>
      <FormRow id="konto" label="Kontobezeichnung" className="mt-1">
        <Combo id="konto" className="mr-[23px] h-full flex-1" />
      </FormRow>
      <FormRow id="bank" label="" className="mt-1.5">
        <Combo id="bank" label="Bank" className="h-full w-[109px]" />
        <input aria-label="Bankname" className="ml-1.5 mr-[23px] h-full flex-1 border border-[#dfdfdf] bg-[#f8f8f8]" />
      </FormRow>
    </div>
    <VScroll thumb="h-[203px]" grip="mt-[95px]" />
  </div>
);

const DetailPanel = () => (
  <aside className="flex w-[708px] shrink-0 flex-col border-l-2 border-[#ededed] text-sm text-[#444]">
    <div className="flex h-[38px] shrink-0 items-center justify-between bg-[#f7f7f7] pl-1.5 pr-1.5 text-[#222]">
      Hauptauftrag
      <button aria-label="Anheften"><PinIcon /></button>
    </div>
    <div className="flex h-[33px] shrink-0 items-center gap-2 pl-0.5 pt-1 text-[#333]">
      <svg width="7" height="24" aria-hidden="true">
        <path d="M2 0v24M5 0v24" stroke="#c8c8c8" strokeWidth="1" strokeDasharray="1 2" />
      </svg>
      <button aria-label="Verlauf"><MdAccessTime size={20} /></button>
      <button aria-label="Rückstellung" className="text-black"><PiggyIcon size={18} /></button>
      <button aria-label="Zahlung"><CardDotsIcon size={19} /></button>
      <button aria-label="Einstellungen" className="flex items-center gap-3 text-[#555]">
        <MdOutlineSettings size={17} /> <Caret className="w-1.5 text-black" />
      </button>
      <button aria-label="Drucken" className="flex items-center gap-3 text-black">
        <MdPrint size={21} /> <Caret className="w-1.5" />
      </button>
      <button aria-label="Mehr" className="pt-1">
        <svg width="8" height="16" viewBox="0 0 8 16" aria-hidden="true"><path d="M1 7h6M1 10h6" stroke="#333" /><path d="M1 11.500h6L4 15z" fill="#000" /></svg>
      </button>
    </div>
    <DetailForm />
    <Splitter />
    <div className="flex flex-1 overflow-hidden">
      <div className="flex flex-1 flex-col pt-[18px]">
        <ValueGroup name="budget" rows={VALUES_TOP} className="gap-1" />
        <ValueGroup name="nachlass" rows={VALUES_DISCOUNT} className="mt-[17px] gap-[5px]" />
        <ValueGroup name="aktuell" rows={VALUES_CURRENT} className="mt-4 gap-1" />
        <ValueGroup name="erwartet" rows={VALUES_EXPECTED} className="mt-[7px] h-[448px] justify-between" />
      </div>
      <VScroll thumb="h-[778px]" grip="mt-[382px]" />
    </div>
    <div role="tablist" className="flex h-9 shrink-0 gap-2.5 border-b border-[#dedede] bg-[#f1f1f1] text-[#333]">
      {['Auftragswert', 'Auftragsdaten', 'Zahlungsplan', 'Ergänzungen', 'Dokumente'].map((tab, i) => (
        <button
          key={tab}
          role="tab"
          aria-selected={i === 0}
          className={clsx(i === 0 ? 'bg-white px-[9px]' : 'bg-[#dfdfdf] px-[7px]')}
        >
          {tab}
        </button>
      ))}
    </div>
  </aside>
);

/* ---------- dialog ---------- */

const PartnerDialog = () => (
  <section
    role="dialog"
    aria-label="COOR: Projektbeteiligten anlegen"
    className="absolute left-[546px] top-[373px] flex h-[719px] w-[1270px] flex-col border border-[#8a8a8a] bg-white text-sm text-[#666] shadow-sm"
  >
    <div className="flex h-[37px] shrink-0 items-center pl-2.5 text-[#222]">
      <CoorLogo size={20} />
      <h2 className="ml-1 flex-1">COOR: Projektbeteiligten anlegen</h2>
      <div className="flex pr-0.5">
        <button aria-label="Minimieren" className="flex w-[57px] justify-center"><Svg size={13}><path d="M0 12h24" /></Svg></button>
        <button aria-label="Maximieren" className="flex w-[57px] justify-center"><Svg size={13}><path d="M1 1h22v22H1z" /></Svg></button>
        <button aria-label="Schließen" className="flex w-[57px] justify-center"><Svg size={13}><path d="M1 1l22 22M23 1L1 23" /></Svg></button>
      </div>
    </div>
    <div className="ml-auto h-px w-[614px] shrink-0 bg-[#e2e2e2]" />
    <div className="flex h-[30px] shrink-0 items-center gap-2 pl-1.5 pr-[17px] text-black">
      <button aria-label="Liste"><TreeListIcon size={17} /></button>
      <button aria-label="Filter" className="pl-px"><FilterIcon size={18} /></button>
      <div className="flex-1" />
      <FilterPlusIcon size={18} />
      <label htmlFor="bereiche" className="ml-0.5 text-[#666]">Tätigkeitsbereiche</label>
      <Combo id="bereiche" className="h-[27px] w-[241px]" />
    </div>
    <table className="mt-3 h-[328px] w-full table-fixed border-separate border-spacing-0">
      <colgroup>
        <col className="w-6" />
        <col className="w-[22px]" />
        <col className="w-6" />
        <col className="w-[94px]" />
        <col className="w-[169px]" />
        <col className="w-[209px]" />
        <col className="w-[204px]" />
        <col className="w-[145px]" />
        <col className="w-[123px]" />
        <col />
      </colgroup>
      <thead className="text-[#333]">
        <tr className="h-[29px]">
          <td />
          <th className="bg-[#e0e0e0] p-0"><ColumnsIcon /></th>
          <th className={headCell} />
          <th className={headCell}>
            <div className="flex items-center justify-between pl-2.5 pr-0.5">Nummer <DeltaIcon size={13} /></div>
          </th>
          {['Synonym', 'Name 1', 'Straße', 'PLZ', 'Staat', 'Bewertung in Sternen'].map((head) => (
            <th key={head} className={headCell}>{head}</th>
          ))}
        </tr>
      </thead>
      <tbody>
        {PARTNERS.map(([nr, synonym, name, street, zip, country, expandable], i) => {
          const cell = clsx('whitespace-nowrap border-b border-[#e2e2e2] p-0 pl-[7px]', i === 0 && 'bg-[#114dad] text-white');
          return (
            <tr key={nr}>
              <td className="p-0">{expandable && <div className="flex justify-center"><Chevron /></div>}</td>
              <td className="border-x border-b border-[#e2e2e2] bg-[#fafafa] p-0" />
              <td className={cell}><div className="h-[10px] w-[10px] bg-[#4fc95b]" /></td>
              <td className={cell}>{nr}</td>
              <td className={cell}>{synonym}</td>
              <td className={cell}>{name}</td>
              <td className={cell}>{street}</td>
              <td className={cell}>{zip}</td>
              <td className={cell}>{country}</td>
              <td className={cell} />
            </tr>
          );
        })}
      </tbody>
    </table>
    <div className="flex-1" />
    <div className="flex items-center justify-end gap-3 pr-[15px]">
      <label htmlFor="rolle" className="pb-1.5 text-[#444]">Projektrolle</label>
      <Combo id="rolle" value="Ausführender Auftragnehmer" className="h-[27px] w-[241px]" textClass="pl-[7px] text-[#333]" />
    </div>
    <div className="mb-3.5 mt-10 flex justify-end gap-2.5 pr-4 text-[#222]">
      <button className="h-[30px] w-[102px] border border-[#b4b4b4] bg-[#e1e1e1] text-[15px]">Abbrechen</button>
      <button className="h-[30px] w-[78px] border border-[#b4b4b4] bg-[#e1e1e1] text-[15px]">Ok</button>
    </div>
    <svg width="12" height="12" className="absolute bottom-0.5 right-0.5" aria-hidden="true">
      <path d="M8 0h2v2H8zM8 4h2v2H8zM8 8h2v2H8zM4 4h2v2H4zM4 8h2v2H4zM0 8h2v2H0z" fill="#bdbdbd" />
    </svg>
  </section>
);

/* ---------- shell ---------- */

const StatusBar = () => (
  <footer className="flex h-[38px] shrink-0 flex-col bg-white text-sm text-[#444]">
    <div className="flex flex-1 items-center pb-1.5 pl-2.5">
      <span className="flex-1">Bereit</span>
      <span className="flex w-[287px] items-center gap-3.5 text-[#333]"><BuildingIcon size={20} />Neubau Quartier</span>
      <span className="flex w-[279px] items-center gap-3.5"><MdPerson size={19} className="text-black" />Admin</span>
    </div>
    <div className="flex h-0.5">
      <div className="w-[59px] bg-[#808080]" />
      <div className="w-[423px] bg-[#d2d2d2]" />
      <div className="flex-1 bg-[#808080]" />
    </div>
  </footer>
);

const MonitorStand = () => (
  <div className="h-[55px] shrink-0 bg-white">
    <div className="h-full bg-[radial-gradient(ellipse_50%_220%_at_50%_0%,#cbcbcb_0%,#dadada_50%,#f2f2f2_80%,#ffffff_100%)]">
      <svg width="1008" height="55" viewBox="0 0 1008 55" className="mx-auto block" aria-hidden="true">
        <defs>
          <linearGradient id="foot" x1="0" y1="0" x2="0" y2="1">
            <stop offset="0" stopColor="#c9c9c9" />
            <stop offset="1" stopColor="#dadada" />
          </linearGradient>
        </defs>
        <path d="M29 0h950l28 38H1z" fill="url(#foot)" />
        <path d="M144 0h718v15H144z" fill="#d9d9d9" />
        <path d="M0 38h1008v9q0 4-6 4H6q-6 0-6-4z" fill="#efefef" />
        <path d="M2 51.500h1004" stroke="#cfcfcf" />
      </svg>
    </div>
  </div>
);

const App = () => (
  <div className="flex min-h-screen flex-col bg-[#eaeaea] font-['Open_Sans','Noto_Sans',sans-serif]">
    <div className="flex flex-1 flex-col pb-[26px] pl-6 pr-[26px] pt-[26px]">
      <div className="relative flex flex-1 flex-col bg-white">
        <TitleBar />
        <Ribbon />
        <div className="flex flex-1">
          <Navigation />
          <Workspace />
          <DetailPanel />
        </div>
        <StatusBar />
        <PartnerDialog />
      </div>
    </div>
    <MonitorStand />
  </div>
);

export default App;
